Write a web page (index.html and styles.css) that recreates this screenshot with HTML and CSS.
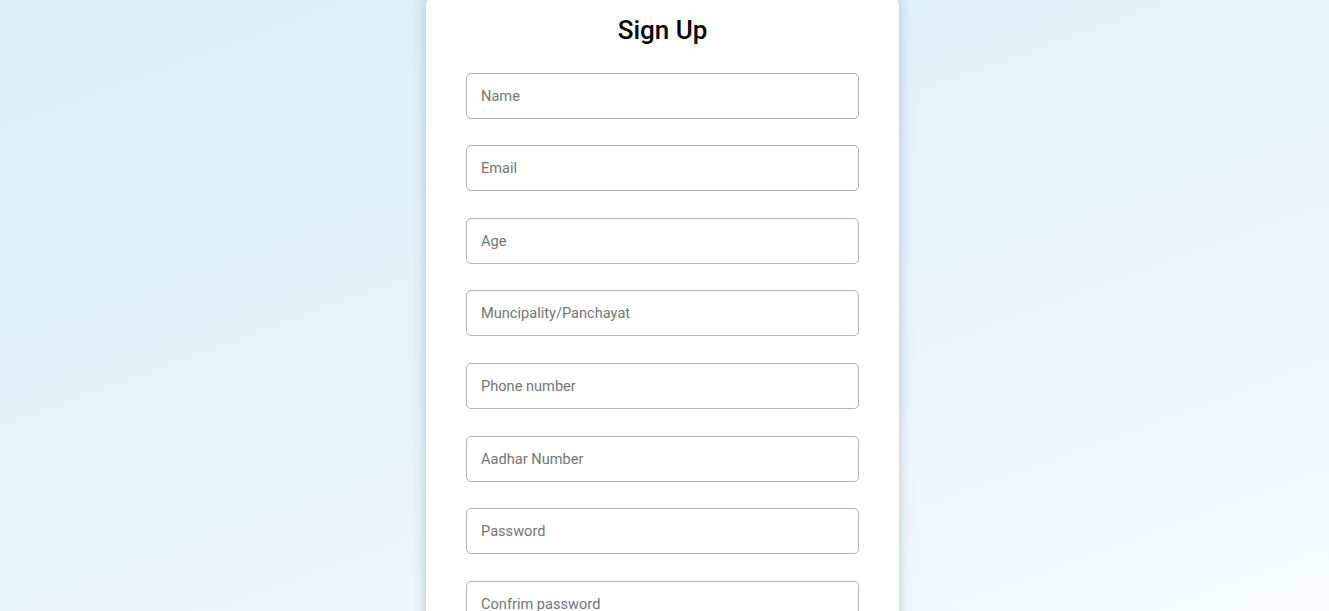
FILE: index.html
```html
<!DOCTYPE html>
<html lang="en">
<head>
<meta charset="utf-8">
<title>Sign Up</title>
<link rel="stylesheet" href="styles.css">
</head>
<body>
<main class="page">
  <form class="card">
    <h1 class="title">Sign Up</h1>
    <input class="field" type="text" placeholder="Name">
    <input class="field" type="email" placeholder="Email">
    <input class="field" type="text" placeholder="Age">
    <input class="field" type="text" placeholder="Muncipality/Panchayat">
    <input class="field" type="text" placeholder="Phone number">
    <input class="field" type="text" placeholder="Aadhar Number">
    <input class="field" type="password" placeholder="Password">
    <input class="field" type="password" placeholder="Confrim password">
  </form>
</main>
</body>
</html>
```

FILE: styles.css
```css
* { box-sizing: border-box; }
html, body { margin: 0; padding: 0; }
body {
  font-family: Roboto, "Liberation Sans", sans-serif;
  background: linear-gradient(160deg, #dbeff8 0%, #e6f3fa 50%, #f7fbfe 100%);
  min-height: 100vh;
  overflow: hidden;
}
.page {
  display: flex;
  justify-content: center;
  padding-right: 4px;
  height: 100vh;
}
.card {
  width: 473px;
  background: #fff;
  border-radius: 12px;
  margin-top: -6px;
  padding: 21px 40px 40px;
  box-shadow: 0 0 14px rgba(80, 110, 130, 0.35);
  display: flex;
  flex-direction: column;
  gap: 26.6px;
  align-self: flex-start;
}
.title {
  margin: 0;
  text-align: center;
  font-size: 26px;
  font-weight: 500;
  color: #000;
  line-height: 31px;
}
.field {
  display: block;
  width: 100%;
  height: 46px;
  padding: 0 14px;
  border: 1px solid #b3b3b3;
  border-radius: 5px;
  font-family: Roboto, "Liberation Sans", sans-serif;
  font-size: 14.6px;
  color: #333;
  background: #fff;
  outline: none;
}
.field::placeholder { color: #757575; }
```
